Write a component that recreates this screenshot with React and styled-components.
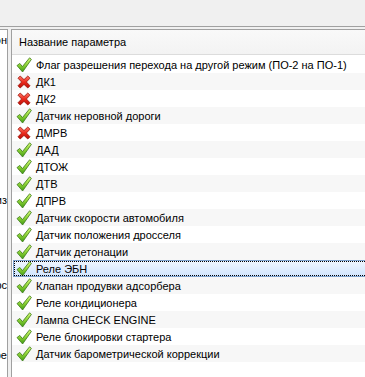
import React from "react";
import styled, { createGlobalStyle } from "styled-components";

const GlobalStyle = createGlobalStyle`
  html, body {
    margin: 0;
    padding: 0;
    background: #f0f0f0;
    overflow: hidden;
  }
  body {
    font-family: "Liberation Sans", "DejaVu Sans", sans-serif;
    font-size: 11px;
    color: #000;
  }
`;

const Window = styled.div`
  width: 365px;
  height: 377px;
  overflow: hidden;
  display: flex;
  flex-direction: column;
  background: #f0f0f0;
`;

const TopBar = styled.div`
  height: 26px;
  flex: none;
  border-bottom: 1px solid #a0a0a0;
  background: #f0f0f0;
`;

const Body = styled.div`
  flex: 1;
  display: flex;
  gap: 3px;
  padding-top: 2px;
  min-height: 0;
`;

const SidePanel = styled.div`
  width: 7px;
  flex: none;
  background: #fff;
  border-top: 1px solid #a0a0a0;
  border-right: 1px solid #a0a0a0;
  overflow: hidden;
  display: flex;
  flex-direction: column;
`;

const SideLabel = styled.div`
  display: flex;
  justify-content: flex-end;
  white-space: nowrap;
  line-height: 13px;
  margin-top: ${(p) => p.$offset}px;
`;

const ListPanel = styled.div`
  flex: 1;
  min-width: 0;
  background: #fff;
  border-top: 1px solid #a0a0a0;
  border-left: 1px solid #a0a0a0;
  overflow: hidden;
`;

const Header = styled.div`
  height: 24px;
  display: flex;
  align-items: center;
  padding-left: 7px;
  background: linear-gradient(#f9f9f9, #f3f3f3);
  border-bottom: 1px solid #dcdcdc;
  margin-bottom: 1px;
  white-space: nowrap;
`;

const Rows = styled.div`
  display: flex;
  flex-direction: column;
  width: 420px;
`;

const Row = styled.div`
  position: relative;
  height: 17px;
  display: flex;
  align-items: center;
  gap: 4px;
  padding-left: 4px;
  white-space: nowrap;
  background: ${(p) => (p.$odd ? "#f7f7f7" : "#fff")};
  ${(p) =>
    p.$selected &&
    `
    margin-left: 1px;
    padding-left: 3px;
    background: linear-gradient(#f1f7ff, #cfe4fd);
    box-shadow: inset 0 0 0 1px #7da2ce;
    &::after {
      content: "";
      position: absolute;
      inset: 1px;
      border: 1px dotted #000;
      pointer-events: none;
    }
  `}
`;

const IconBox = styled.span`
  width: 16px;
  height: 16px;
  flex: none;
  display: flex;
  align-items: center;
  justify-content: center;
`;

const CheckIcon = () => (
  <svg width="16" height="16" viewBox="0 0 16 16">
    <defs>
      <linearGradient id="chk" x1="0" y1="0" x2="0" y2="1">
        <stop offset="0" stopColor="#d6f77a" />
        <stop offset="0.5" stopColor="#8fd436" />
        <stop offset="1" stopColor="#3f9a12" />
      </linearGradient>
    </defs>
    <path
      d="M1 8.6 L3.8 6.4 L6.4 9.6 L13.6 0.8 L15.4 2.4 L6.6 15 Z"
      fill="url(#chk)"
      stroke="#3b7a1a"
      strokeWidth="0.8"
      strokeLinejoin="round"
    />
  </svg>
);

const CrossIcon = () => (
  <svg width="16" height="16" viewBox="0 0 16 16">
    <defs>
      <linearGradient id="crs" x1="0" y1="0" x2="0" y2="1">
        <stop offset="0" stopColor="#ff7a6a" />
        <stop offset="0.5" stopColor="#ec2a1c" />
        <stop offset="1" stopColor="#b80c06" />
      </linearGradient>
    </defs>
    <path
      d="M2 4.2 L4.2 2 L8 5.6 L11.8 2 L14 4.2 L10.4 8 L14 11.8 L11.8 14 L8 10.4 L4.2 14 L2 11.8 L5.6 8 Z"
      fill="url(#crs)"
      stroke="#9a1208"
      strokeWidth="0.8"
      strokeLinejoin="round"
    />
  </svg>
);

const params = [
  { name: "Флаг разрешения перехода на другой режим (ПО-2 на ПО-1)", ok: true },
  { name: "ДК1", ok: false },
  { name: "ДК2", ok: false },
  { name: "Датчик неровной дороги", ok: true },
  { name: "ДМРВ", ok: false },
  { name: "ДАД", ok: true },
  { name: "ДТОЖ", ok: true },
  { name: "ДТВ", ok: true },
  { name: "ДПРВ", ok: true },
  { name: "Датчик скорости автомобиля", ok: true },
  { name: "Датчик положения дросселя", ok: true },
  { name: "Датчик детонации", ok: true },
  { name: "Реле ЭБН", ok: true, selected: true },
  { name: "Клапан продувки адсорбера", ok: true },
  { name: "Реле кондиционера", ok: true },
  { name: "Лампа CHECK ENGINE", ok: true },
  { name: "Реле блокировки стартера", ok: true },
  { name: "Датчик барометрической коррекции", ok: true },
];

const sideLabels = [
  { text: "Тип параметрон", offset: 4 },
  { text: "Дополнительно из", offset: 147 },
  { text: "Статус параметрс", offset: 72 },
  { text: "Значение в бите ре", offset: 57 },
];

export default function App() {
  return (
    <Window>
      <GlobalStyle />
      <TopBar />
      <Body>
        <SidePanel>
          {sideLabels.map((l) => (
            <SideLabel key={l.text} $offset={l.offset}>
              <span>{l.text}</span>
            </SideLabel>
          ))}
        </SidePanel>
        <ListPanel>
          <Header>Название параметра</Header>
          <Rows>
            {params.map((p, i) => (
              <Row key={p.name} $odd={i % 2 === 1} $selected={p.selected}>
                <IconBox>{p.ok ? <CheckIcon /> : <CrossIcon />}</IconBox>
                {p.name}
              </Row>
            ))}
          </Rows>
        </ListPanel>
      </Body>
    </Window>
  );
}
